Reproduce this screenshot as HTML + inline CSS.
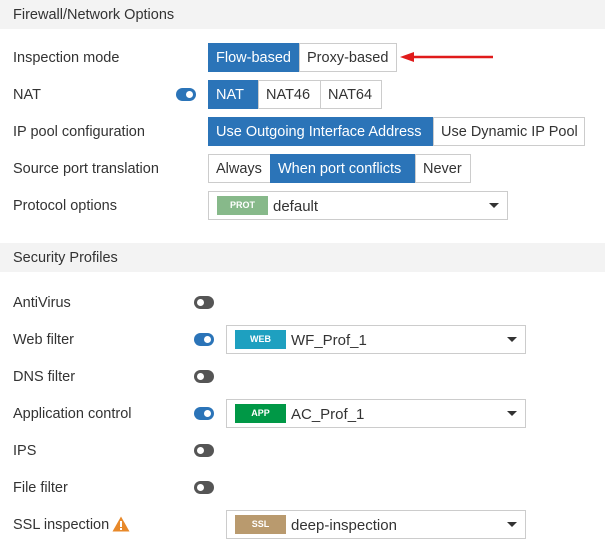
<!DOCTYPE html>
<html><head><meta charset="utf-8"><style>
*{box-sizing:border-box;margin:0;padding:0}
body{width:605px;height:548px;background:#fff;font-family:"Liberation Sans",sans-serif;font-size:14.5px;color:#333;position:relative;overflow:hidden}
.a{position:absolute}
.hdr{position:absolute;left:0;width:605px;height:29px;background:#f3f3f3;padding-left:13px;line-height:30px;color:#333}
.lbl{position:absolute;left:13px;line-height:30px;height:29px}
.bg{position:absolute;display:flex;height:29px}
.bg div{border:1px solid #ccc;line-height:29px;height:29px;padding:0 7px;background:#fff;margin-left:-1px;white-space:nowrap}
.bg div:first-child{margin-left:0}
.bg div.on{background:#2b74b8;color:#fff;border-color:#2b74b8}
.tg{position:absolute;width:20px;height:13px;border-radius:7px;background:#555}
.tg::after{content:"";position:absolute;left:3px;top:3px;width:7px;height:7px;border-radius:50%;background:#fff}
.tg.on{background:#2b74b8}
.tg.on::after{left:10px}
.sel{position:absolute;border:1px solid #ccc;height:29px;background:#fff}
.sel .b{position:absolute;left:8px;top:4px;width:51px;height:19px;color:#fff;font-size:9px;font-weight:bold;text-align:center;line-height:19px}
.sel .t{position:absolute;left:64px;top:0;line-height:29px;font-size:15px}
.sel .c{position:absolute;right:8px;top:11px;width:0;height:0;border-left:5px solid transparent;border-right:5px solid transparent;border-top:5px solid #333}
</style></head><body>
<div class="hdr" style="top:0">Firewall/Network Options</div>
<div class="lbl" style="top:43px">Inspection mode</div>
<div class="bg" style="left:208px;top:43px"><div class="on" style="width:92px">Flow-based</div><div style="width:98px">Proxy-based</div></div>
<svg class="a" style="left:398px;top:50px" width="100" height="14"><line x1="10" y1="7" x2="95" y2="7" stroke="#e01b1b" stroke-width="2.5"/><polygon points="2,7 16,2 16,12" fill="#e01b1b"/></svg>

<div class="lbl" style="top:80px">NAT</div>
<div class="tg on" style="left:176px;top:88px"></div>
<div class="bg" style="left:208px;top:80px"><div class="on" style="width:51px">NAT</div><div style="width:63px">NAT46</div><div style="width:62px">NAT64</div></div>

<div class="lbl" style="top:117px">IP pool configuration</div>
<div class="bg" style="left:208px;top:117px"><div class="on" style="width:226px">Use Outgoing Interface Address</div><div style="width:152px">Use Dynamic IP Pool</div></div>

<div class="lbl" style="top:154px">Source port translation</div>
<div class="bg" style="left:208px;top:154px"><div style="width:63px">Always</div><div class="on" style="width:146px">When port conflicts</div><div style="width:56px">Never</div></div>

<div class="lbl" style="top:191px">Protocol options</div>
<div class="sel" style="left:208px;top:191px;width:300px"><div class="b" style="background:#87b98a">PROT</div><div class="t">default</div><div class="c"></div></div>

<div class="hdr" style="top:243px">Security Profiles</div>
<div class="lbl" style="top:288px">AntiVirus</div><div class="tg" style="left:194px;top:296px"></div>
<div class="lbl" style="top:325px">Web filter</div><div class="tg on" style="left:194px;top:333px"></div>
<div class="sel" style="left:226px;top:325px;width:300px"><div class="b" style="background:#1ea0c0">WEB</div><div class="t">WF_Prof_1</div><div class="c"></div></div>
<div class="lbl" style="top:362px">DNS filter</div><div class="tg" style="left:194px;top:370px"></div>
<div class="lbl" style="top:399px">Application control</div><div class="tg on" style="left:194px;top:407px"></div>
<div class="sel" style="left:226px;top:399px;width:300px"><div class="b" style="background:#009846">APP</div><div class="t">AC_Prof_1</div><div class="c"></div></div>
<div class="lbl" style="top:436px">IPS</div><div class="tg" style="left:194px;top:444px"></div>
<div class="lbl" style="top:473px">File filter</div><div class="tg" style="left:194px;top:481px"></div>
<div class="lbl" style="top:510px">SSL inspection</div>
<svg class="a" style="left:112px;top:516px" width="18" height="16"><polygon points="9,0.5 17.5,15.5 0.5,15.5" fill="#e8892a"/><rect x="8" y="5" width="2" height="6" fill="#fff"/><rect x="8" y="12" width="2" height="2" fill="#fff"/></svg>
<div class="sel" style="left:226px;top:510px;width:300px"><div class="b" style="background:#b99a6e">SSL</div><div class="t">deep-inspection</div><div class="c"></div></div>
</body></html>
